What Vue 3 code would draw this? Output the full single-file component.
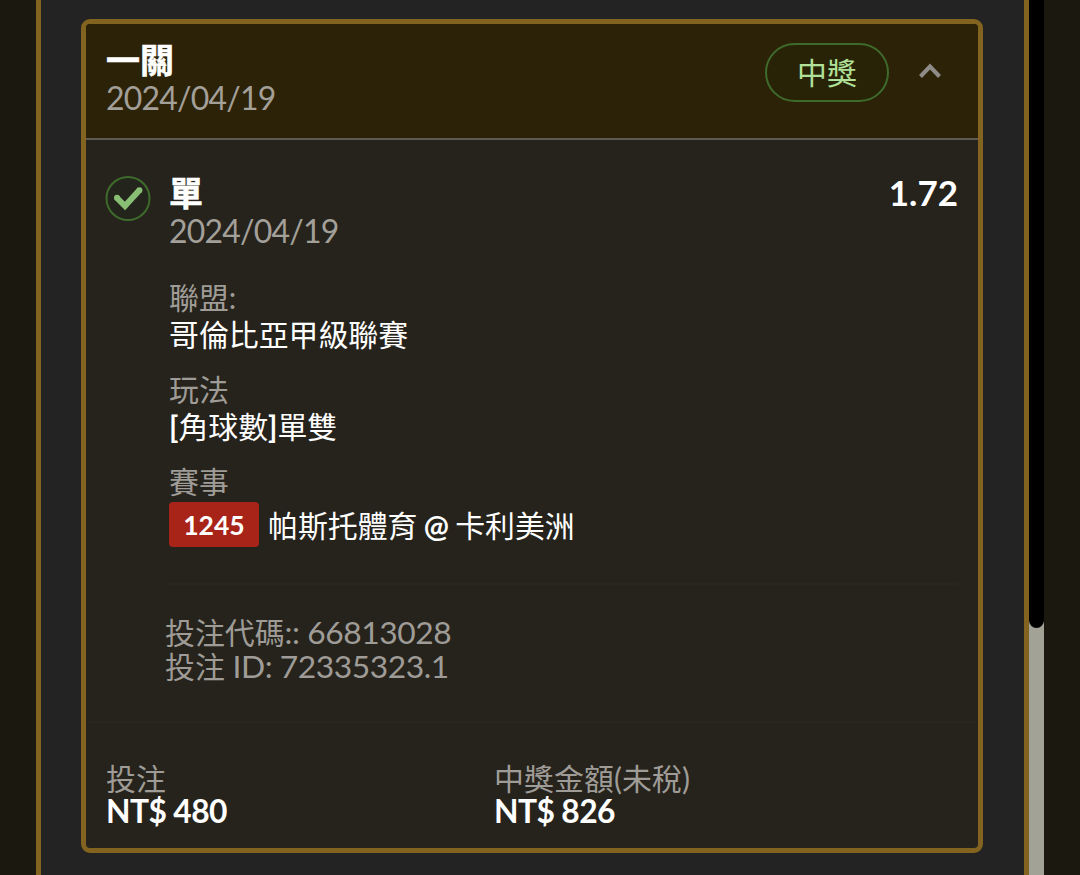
<template>
  <div class="page">
    <div class="panel">
      <section class="card">
        <header class="card-header">
          <div>
            <div class="title">一關</div>
            <div class="date">2024/04/19</div>
          </div>
          <div class="header-right">
            <span class="status">中獎</span>
            <svg class="chevron" viewBox="0 0 22 16" fill="none" stroke="#8f8b88" stroke-width="4">
              <path d="M1.5 13.5 11 3.5l9.5 10" />
            </svg>
          </div>
        </header>

        <div class="bet">
          <svg class="check" viewBox="0 0 46 46" fill="none">
            <circle cx="23" cy="23.5" r="21.5" fill="#23241b" stroke="#3e6b2c" stroke-width="2" />
            <path d="M11.5 22.5 20 31 35 14.5" stroke="#89bf75" stroke-width="6" />
            <path d="M12 22.8h.01M34.4 15.2h.01" stroke="#89bf75" stroke-width="6" stroke-linecap="round" />
          </svg>
          <div class="bet-main">
            <div class="bet-top">
              <span class="title">單</span>
              <span class="odds">1.72</span>
            </div>
            <div class="date">2024/04/19</div>

            <dl class="details">
              <div class="detail">
                <dt>聯盟:</dt>
                <dd>哥倫比亞甲級聯賽</dd>
              </div>
              <div class="detail">
                <dt>玩法</dt>
                <dd><span class="mark">[</span>角球數<span class="mark">]</span>單雙</dd>
              </div>
              <div class="detail">
                <dt>賽事</dt>
                <dd class="match">
                  <span class="match-no">1245</span>
                  <span class="teams">帕斯托體育 <span class="mark">@</span> 卡利美洲</span>
                </dd>
              </div>
            </dl>

            <div class="codes">
              <div>投注代碼<span class="num">:: 66813028</span></div>
              <div>投注<span class="num"> ID: 72335323.1</span></div>
            </div>
          </div>
        </div>

        <footer class="summary">
          <div v-for="sum in sums" :key="sum.label" class="sum">
            <div class="sum-label">{{ sum.label }}</div>
            <div class="sum-value">{{ sum.value }}</div>
          </div>
        </footer>
      </section>
    </div>
    <div class="scrollbar"><div class="thumb"></div></div>
  </div>
</template>

<script setup>
const sums = [
  { label: '投注', value: 'NT$ 480' },
  { label: '中獎金額(未稅)', value: 'NT$ 826' }
]
</script>

<style>
body {
  background: #1b1810;
  overflow: hidden;
}
</style>

<style scoped>
.page {
  display: flex;
  height: 875px;
  padding-left: 36px;
  box-sizing: border-box;
  font-family: Lato, "Noto Sans CJK TC", sans-serif;
  font-size: 29.9px;
  color: #fff;
}

.panel {
  width: 993px;
  box-sizing: border-box;
  padding: 19px 41px 0 40px;
  border: solid #82631f;
  border-width: 0 5px;
  background: #232323;
}

.card {
  height: 834px;
  box-sizing: border-box;
  border: 5px solid #82631f;
  border-radius: 9px;
  background: #26231c;
}

.card-header {
  display: flex;
  justify-content: space-between;
  height: 116px;
  box-sizing: border-box;
  padding: 17px 37px 0 20px;
  border-bottom: 2px solid #605b50;
  background: #2c2207;
  border-radius: 4px 4px 0 0;
}

.title {
  font-size: 34px;
  font-weight: 700;
  line-height: 37px;
  -webkit-text-stroke: 0.6px #fff;
}

.date {
  font-size: 32px;
  line-height: 40px;
  letter-spacing: -0.78px;
  color: #a39f99;
}

.header-right {
  display: flex;
  align-items: flex-start;
  gap: 30px;
}

.status {
  width: 124px;
  height: 59px;
  margin-top: 2px;
  box-sizing: border-box;
  border: 2px solid #3e6b2c;
  border-radius: 30px;
  background: #282307;
  color: #b1e198;
  line-height: 55px;
  text-align: center;
}

.chevron {
  width: 22px;
  height: 16px;
  margin-top: 22px;
}

.bet {
  display: flex;
  height: 583px;
  box-sizing: border-box;
  padding: 34px 20px 0 19px;
  border-bottom: 2px solid #29261f;
}

.check {
  flex: none;
  width: 46px;
  height: 46px;
  margin-top: 1px;
}

.bet-main {
  flex: 1;
  padding-left: 18px;
}

.bet-top {
  display: flex;
  justify-content: space-between;
}

.odds {
  font-size: 35px;
  font-weight: 700;
  line-height: 37px;
}

.details {
  height: 334px;
  margin: 0;
  padding-top: 28px;
  box-sizing: border-box;
  border-bottom: 2px solid #29261f;
}

.detail {
  height: 92px;
}

dt {
  line-height: 37px;
  color: #9f9c97;
}

dd {
  margin: 0;
  line-height: 37px;
}

.match {
  display: flex;
  gap: 9px;
  padding-top: 2px;
}

.match-no {
  width: 90px;
  height: 45px;
  border-radius: 4px;
  background: #a82419;
  font-size: 26.5px;
  font-weight: 700;
  line-height: 46px;
  text-align: center;
}

.teams {
  line-height: 46px;
  word-spacing: -1.4px;
}

.mark {
  font-weight: 700;
}

.codes {
  margin-left: -4px;
  padding-top: 30px;
  line-height: 34px;
  color: #9f9c97;
}

.num {
  font-size: 31.8px;
  letter-spacing: -0.45px;
  white-space: pre;
}

.summary {
  display: flex;
  padding: 38px 20px 0 20px;
}

.sum {
  width: 388px;
}

.sum-label {
  line-height: 34px;
  letter-spacing: 0.1px;
  color: #9f9c97;
}

.sum-value {
  font-size: 31.8px;
  font-weight: 700;
  line-height: 33px;
  letter-spacing: -0.6px;
}

.scrollbar {
  width: 15px;
  background: #a2a296;
}

.thumb {
  height: 628px;
  border-radius: 0 0 8px 8px;
  background: #000;
}
</style>
